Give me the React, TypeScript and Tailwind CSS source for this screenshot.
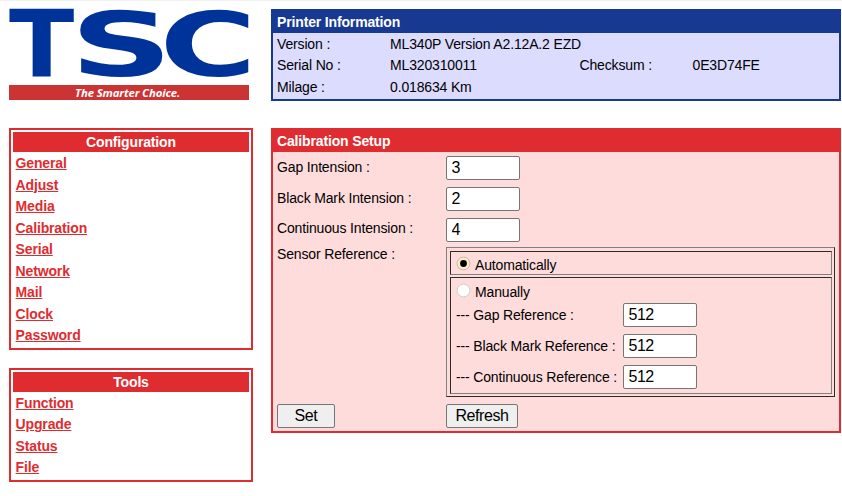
import React from 'react';

const configuration = ['General', 'Adjust', 'Media', 'Calibration', 'Serial', 'Network', 'Mail', 'Clock', 'Password'];
const tools = ['Function', 'Upgrade', 'Status', 'File'];

function Logo() {
  return (
    <svg width="240" height="91" viewBox="0 0 240 91" className="block overflow-visible">
      <g fill="#003399" fontFamily="'DejaVu Sans', sans-serif" fontWeight="700" fontSize="92">
        <text transform="translate(0 67) scale(1.04 1)">T</text>
        <text transform="translate(61 66) scale(1.55 0.965)">S</text>
        <text transform="translate(150.5 66) scale(1.44 0.965)">C</text>
      </g>
      <rect y="75" width="240" height="15" fill="#cc3333" />
      <text x="66" y="86.5" fill="#fff" fontFamily="'Open Sans', sans-serif" fontStyle="italic" fontWeight="700" fontSize="11.4">
        The Smarter Choice.
      </text>
    </svg>
  );
}

function Menu({ title, items }: { title: string; items: string[] }) {
  return (
    <nav className="border-2 border-[#df2c30] px-0.5 pt-0.5 pb-[1.25px]">
      <h2 className="h-5 bg-[#df2c30] text-center leading-5 font-bold text-white">{title}</h2>
      <ul className="pt-px">
        {items.map((item) => (
          <li key={item} className="h-[21.5px] pl-[2.6px] leading-[21.5px]">
            <a href="#" className="font-bold text-[#df2c30] underline">{item}</a>
          </li>
        ))}
      </ul>
    </nav>
  );
}

function NumberBox({ value }: { value: string }) {
  return (
    <input
      defaultValue={value}
      className="block h-6 w-[74px] rounded-[2px] border border-[#767676] bg-white px-[4.5px] text-base tracking-[-0.5px] text-black outline-none"
    />
  );
}

function Setting({ label, value }: { label: string; value: string }) {
  return (
    <div className="flex h-[30.7px] items-center">
      <label className="w-[169px] pb-[1.5px]">{label}</label>
      <NumberBox value={value} />
    </div>
  );
}

function Reference({ label, value }: { label: string; value: string }) {
  return (
    <div className="flex h-[30.7px] items-center">
      <label className="w-[167px] whitespace-nowrap">{label}</label>
      <NumberBox value={value} />
    </div>
  );
}

function Radio({ label, checked = false }: { label: string; checked?: boolean }) {
  return (
    <label className="flex items-center gap-1">
      <svg width="15" height="15" viewBox="0 0 15 15" className="-mt-1">
        <circle cx="7.5" cy="7.5" r="6.4" fill={checked ? '#fbebc8' : '#fff'} stroke={checked ? '#c9bda0' : '#d0d0d0'} />
        {checked && <circle cx="7.5" cy="7.5" r="3.4" fill="#000" />}
      </svg>
      {label}
    </label>
  );
}

export default function App() {
  return (
    <div className="h-[496px] w-[842px] border-t border-[#f1f1f1] bg-white font-['Liberation_Sans',Arial,sans-serif] text-[14px] tracking-[-0.15px] text-black">
      <div className="flex gap-[18px] pt-2 pl-[9px]">
        <aside className="w-[244px]">
          <div className="h-[119px] pt-px">
            <Logo />
          </div>
          <div className="flex flex-col gap-[18px]">
            <Menu title="Configuration" items={configuration} />
            <Menu title="Tools" items={tools} />
          </div>
        </aside>
        <main className="flex w-[570px] flex-col gap-[27px]">
          <section className="h-[92px] border-2 border-[#183991] bg-[#dcdcff]">
            <h2 className="h-[22px] bg-[#183991] pl-1 leading-[22px] font-bold text-white">Printer Information</h2>
            <div className="grid grid-cols-[113px_189.5px_113px_1fr] pt-[0.8px] pl-1 leading-[21.4px]">
              <span>Version :</span>
              <span className="col-span-3">ML340P Version A2.12A.2 EZD</span>
              <span>Serial No :</span>
              <span>ML320310011</span>
              <span>Checksum :</span>
              <span>0E3D74FE</span>
              <span>Milage :</span>
              <span className="col-span-3">0.018634 Km</span>
            </div>
          </section>
          <section className="h-[305px] border-2 border-[#df2c30] bg-[#ffdcdc]">
            <h2 className="h-[22px] bg-[#df2c30] pl-1 leading-[22px] font-bold text-white">Calibration Setup</h2>
            <div className="pt-px pl-1">
              <Setting label="Gap Intension :" value="3" />
              <Setting label="Black Mark Intension :" value="2" />
              <Setting label="Continuous Intension :" value="4" />
              <div className="flex h-[150px] pt-[2px]">
                <span className="w-[169px] leading-[14px]">Sensor Reference :</span>
                <div className="flex h-[150px] w-[389px] flex-col gap-0.5 border border-t-[#808080] border-r-[#2b2b2b] border-b-[#2b2b2b] border-l-[#808080] pt-[3px] pr-[2px] pb-[2px] pl-[3px]">
                  <div className="h-6 border border-t-[#2b2b2b] border-r-[#808080] border-b-[#808080] border-l-[#2b2b2b] pt-[3px] pl-[5px] leading-[20px]">
                    <Radio label="Automatically" checked />
                  </div>
                  <div className="flex-1 border border-t-[#2b2b2b] border-r-[#808080] border-b-[#808080] border-l-[#2b2b2b] pt-1 pl-[5px] leading-[20px]">
                    <Radio label="Manually" />
                    <div className="-mt-[2px]">
                      <Reference label="--- Gap Reference :" value="512" />
                      <Reference label="--- Black Mark Reference :" value="512" />
                      <Reference label="--- Continuous Reference :" value="512" />
                    </div>
                  </div>
                </div>
              </div>
              <div className="flex pt-[9px] text-base tracking-[-0.4px]">
                <div className="w-[169px]">
                  <button className="h-6 w-[58px] rounded-[2px] border border-[#767676] bg-[#efefef] leading-[22px]">Set</button>
                </div>
                <button className="h-6 w-[72px] rounded-[2px] border border-[#767676] bg-[#efefef] leading-[22px]">Refresh</button>
              </div>
            </div>
          </section>
        </main>
      </div>
    </div>
  );
}
